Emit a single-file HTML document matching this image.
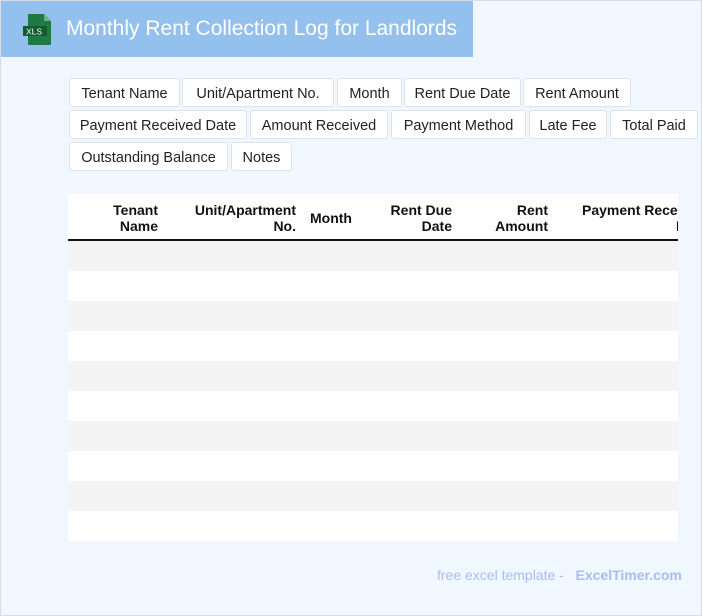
<!DOCTYPE html>
<html><head><style>
body{margin:0;width:702px;height:616px;overflow:hidden;font-family:"Liberation Sans",Arial,sans-serif}
.pg{position:absolute;left:0;top:0;width:702px;height:616px;background:#f0f7ff;box-shadow:inset 0 0 0 1px #d6dde6}
.hd{position:absolute;left:1px;top:1px;width:472px;height:56px;background:#93c0ec}
.hd .t{position:absolute;left:65px;top:16px;color:#fff;font-size:21px}
.tag{position:absolute;background:#fff;border:1px solid #dde3ea;border-radius:3px;font-size:14.5px;color:#222;text-align:center;box-sizing:border-box;height:29px;line-height:30px;white-space:nowrap}
.tb{position:absolute;left:68px;top:194px;width:610px;height:347px;background:#fff;overflow:hidden}
.th{position:absolute;font-weight:bold;font-size:14px;color:#111;text-align:right;line-height:16px;white-space:nowrap}
.r{position:absolute;left:0;width:610px;height:30px}
.ft{position:absolute;top:567px;left:437px;font-size:14px;color:#a9bdf0}
</style></head><body><div class="pg">
<div class="hd">
<svg style="position:absolute;left:20px;top:13px" width="32" height="32" viewBox="0 0 32 32"><path d="M8 0h15l7 7v23a1 1 0 0 1-1 1H8a1 1 0 0 1-1-1V1a1 1 0 0 1 1-1z" fill="#1d7a45"/><path d="M23 0v7h7z" fill="#5fb585"/><rect x="2" y="12" width="24" height="10" fill="#135c32"/><text x="5" y="20.5" font-size="8.5" fill="#fff" font-family="Liberation Sans">XLS</text></svg>
<div class="t">Monthly Rent Collection Log for Landlords</div></div>
<div class="tag" style="left:69px;top:78px;width:111px">Tenant Name</div>
<div class="tag" style="left:182px;top:78px;width:152px">Unit/Apartment No.</div>
<div class="tag" style="left:337px;top:78px;width:65px">Month</div>
<div class="tag" style="left:404px;top:78px;width:117px">Rent Due Date</div>
<div class="tag" style="left:523px;top:78px;width:108px">Rent Amount</div>
<div class="tag" style="left:69px;top:110px;width:178px">Payment Received Date</div>
<div class="tag" style="left:250px;top:110px;width:138px">Amount Received</div>
<div class="tag" style="left:391px;top:110px;width:135px">Payment Method</div>
<div class="tag" style="left:529px;top:110px;width:78px">Late Fee</div>
<div class="tag" style="left:610px;top:110px;width:88px">Total Paid</div>
<div class="tag" style="left:69px;top:142px;width:159px">Outstanding Balance</div>
<div class="tag" style="left:231px;top:142px;width:61px">Notes</div>
<div class="tb">
<div class="th" style="right:520px;top:8px">Tenant<br>Name</div>
<div class="th" style="right:382px;top:8px">Unit/Apartment<br>No.</div>
<div class="th" style="left:242px;top:16px">Month</div>
<div class="th" style="right:226px;top:8px">Rent Due<br>Date</div>
<div class="th" style="right:130px;top:8px">Rent<br>Amount</div>
<div class="th" style="left:514px;top:8px;text-align:left">Payment Received<br><span style="padding-left:94px">D</span></div>
<div style="position:absolute;left:0;top:45px;width:610px;height:2px;background:#111"></div>
<div class="r" style="top:47px;background:#f4f4f4"></div>
<div class="r" style="top:107px;background:#f4f4f4"></div>
<div class="r" style="top:167px;background:#f4f4f4"></div>
<div class="r" style="top:227px;background:#f4f4f4"></div>
<div class="r" style="top:287px;background:#f4f4f4"></div>
</div>
<div class="ft">free excel template - &nbsp;&nbsp;<b>ExcelTimer.com</b></div>
</div></body></html>
